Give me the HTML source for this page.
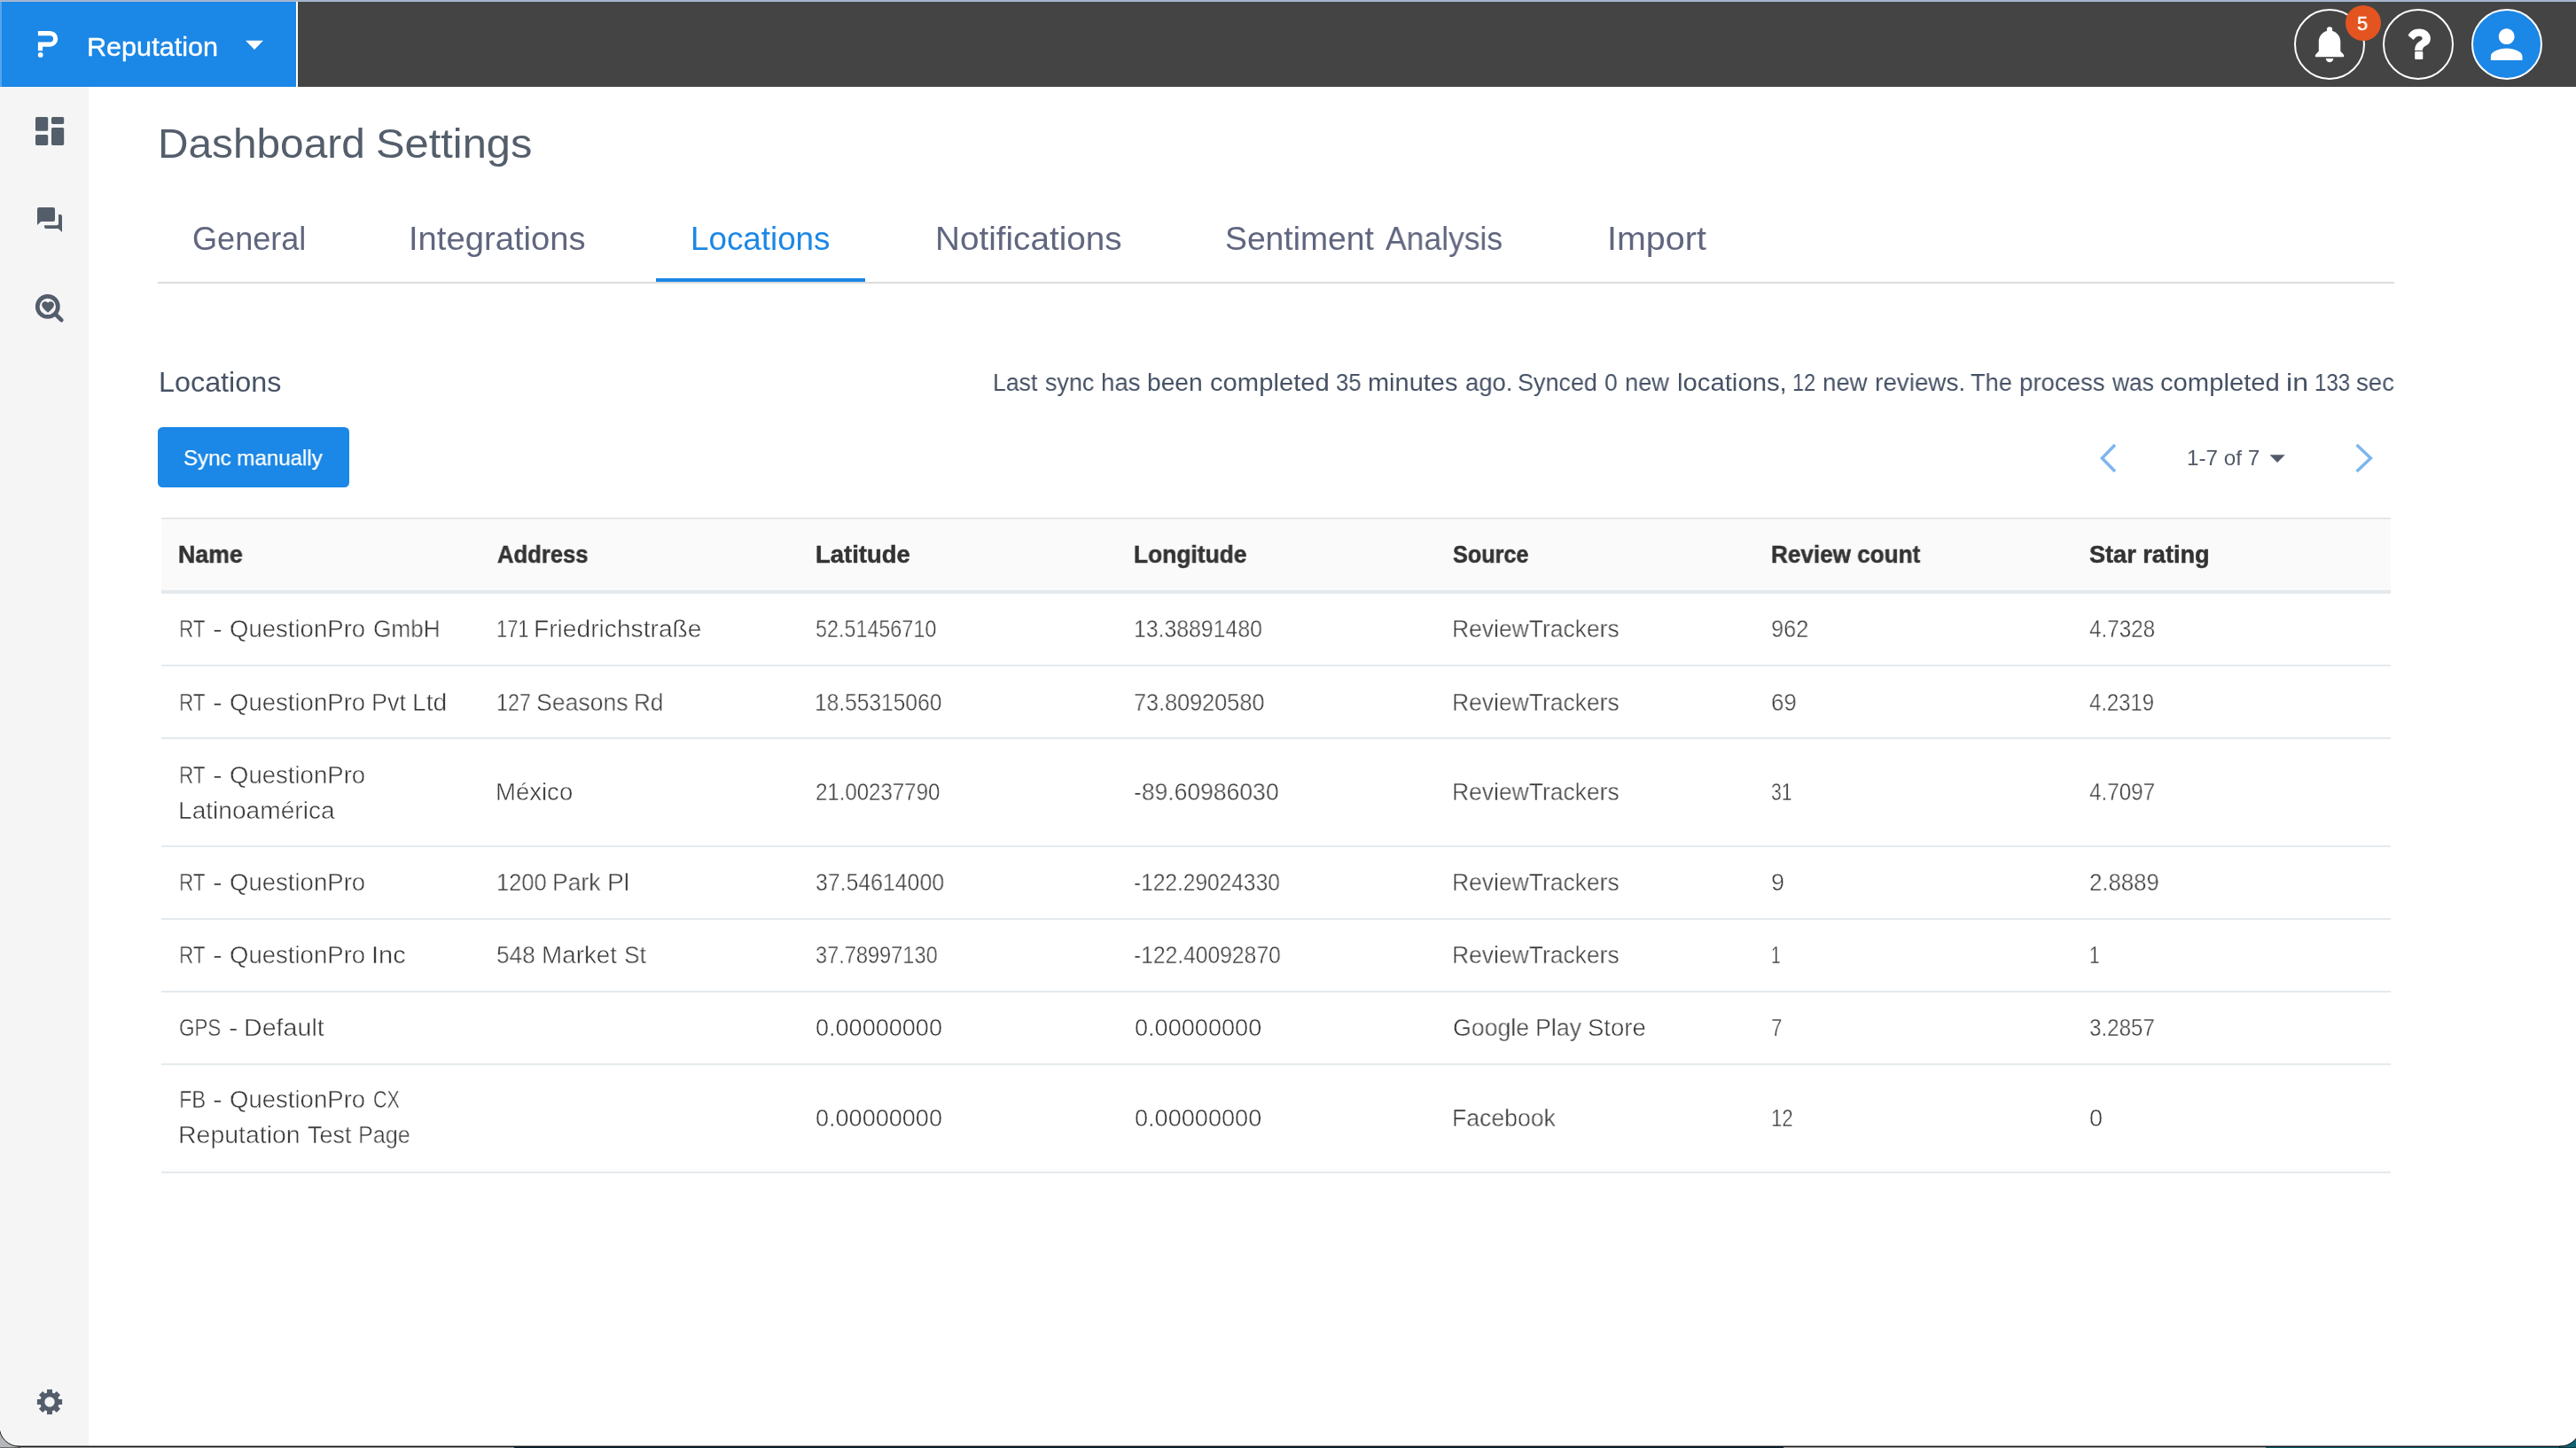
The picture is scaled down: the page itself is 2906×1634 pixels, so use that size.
<!DOCTYPE html>
<html><head><meta charset="utf-8"><title>Dashboard Settings</title><style>
html,body{margin:0;padding:0}
body{width:2906px;height:1634px;position:relative;overflow:hidden;background:#fff;font-family:"Liberation Sans", sans-serif}
.r{position:absolute}
.t{position:absolute;white-space:nowrap;transform-origin:0 0;will-change:transform}
.lt{-webkit-text-stroke:0.45px #fff}
.b5{-webkit-text-stroke:0.5px #fff}
.sw{-webkit-text-stroke:0.4px #fff}
.sb{-webkit-text-stroke:0.25px #fff}
.st{-webkit-text-stroke:0.35px #545e6b}
.sh{-webkit-text-stroke:0.5px #333}
</style></head>
<body>
<div class="r" style="left:0px;top:0px;width:2906px;height:1px;background:#a3b2cb;"></div>
<div class="r" style="left:0px;top:1px;width:2906px;height:1px;background:#afbdd9;"></div>
<div class="r" style="left:0px;top:2px;width:2906px;height:96px;background:#444444;"></div>
<div class="r" style="left:0px;top:2px;width:334px;height:96px;background:#1b87e6;"></div>
<div class="r" style="left:334px;top:2px;width:2px;height:96px;background:#ffffff;"></div>
<div class="r" style="left:0px;top:2px;width:2px;height:96px;background:rgba(255,255,255,0.25);"></div>
<div class="r" style="left:0px;top:98px;width:100px;height:1534px;background:#f5f5f6;"></div>
<div class="r" style="left:178px;top:318px;width:2523px;height:2px;background:#dcdcde;"></div>
<div class="r" style="left:740px;top:314px;width:236px;height:4px;background:#1b87e6;"></div>
<div class="r" style="left:178px;top:482px;width:216px;height:68px;background:#1b87e6;border-radius:5.5px"></div>
<div class="r" style="left:182px;top:584px;width:2515px;height:2px;background:#e8e8e8;"></div>
<div class="r" style="left:182px;top:586px;width:2515px;height:79.7px;background:#fafafa;"></div>
<div class="r" style="left:182px;top:665.7px;width:2515px;height:4.2px;background:#e5e9ec;"></div>
<div class="r" style="left:182px;top:750.2px;width:2515px;height:2px;background:#e4e9ed;"></div>
<div class="r" style="left:182px;top:832.2px;width:2515px;height:2px;background:#e4e9ed;"></div>
<div class="r" style="left:182px;top:954.1px;width:2515px;height:2px;background:#e4e9ed;"></div>
<div class="r" style="left:182px;top:1036.3px;width:2515px;height:2px;background:#e4e9ed;"></div>
<div class="r" style="left:182px;top:1118.1px;width:2515px;height:2px;background:#e4e9ed;"></div>
<div class="r" style="left:182px;top:1199.9px;width:2515px;height:2px;background:#e4e9ed;"></div>
<div class="r" style="left:182px;top:1322.0px;width:2515px;height:2px;background:#e4e9ed;"></div>
<div class="r" style="left:2588px;top:10px;width:80px;height:80px;border-radius:50%;border:2.2px solid #fff;box-sizing:border-box;background:transparent"></div>
<div class="r" style="left:2688px;top:10px;width:80px;height:80px;border-radius:50%;border:2.2px solid #fff;box-sizing:border-box;background:transparent"></div>
<div class="r" style="left:2788px;top:10px;width:80px;height:80px;border-radius:50%;border:2.2px solid #fff;box-sizing:border-box;background:#1b87e6"></div>
<div class="r" style="left:2646px;top:6px;width:40px;height:40px;border-radius:50%;background:#e35420"></div>
<svg class="r" style="left:0;top:0" width="2906" height="1634" viewBox="0 0 2906 1634">
<!-- logo -->
<path d="M42.9 37.6 H56.4 A6.25 6.25 0 0 1 56.4 50.1 H45.5 V57.2" fill="none" stroke="#fff" stroke-width="5.2"/>
<circle cx="45.7" cy="61.9" r="2.9" fill="#fff"/>
<path d="M277 45.8 H297 L287 56 Z" fill="#fff"/>
<!-- dashboard -->
<g fill="#545e6b">
<rect x="40" y="132" width="14.2" height="15.8" rx="1.6"/>
<rect x="40" y="152" width="14.2" height="11.9" rx="1.6"/>
<rect x="58" y="132" width="14.2" height="7.9" rx="1.6"/>
<rect x="58" y="144" width="14.2" height="19.9" rx="1.6"/>
<!-- chat -->
<path d="M44 234 H60 a2 2 0 0 1 2 2 V248 a2 2 0 0 1 -2 2 H46.2 L42 254 V236 a2 2 0 0 1 2 -2z"/>
<path d="M66 242 h2 a2 2 0 0 1 2 2 V262 l-4.2 -4.1 H52 a2 2 0 0 1 -2 -2 v-1.7 h14 a2 2 0 0 0 2 -2 z"/>
<!-- search heart -->
<circle cx="53.8" cy="345.9" r="11.55" fill="none" stroke="#545e6b" stroke-width="4.7"/>
<path d="M62.6 354.6 L69.3 361.2" fill="none" stroke="#545e6b" stroke-width="4.7" stroke-linecap="round"/>
<path transform="translate(45.83 338.25) scale(0.685)" d="M12 21.35l-1.45-1.32C5.4 15.36 2 12.28 2 8.5 2 5.42 4.42 3 7.5 3c1.74 0 3.41.81 4.5 2.09C13.09 3.81 14.76 3 16.5 3 19.58 3 22 5.42 22 8.5c0 3.78-3.4 6.86-8.55 11.54L12 21.35z"/>
</g>
<g transform="translate(56 1582)" fill="#545e6b"><circle r="8.2" fill="none" stroke="#545e6b" stroke-width="5"/><rect x="-3" y="-14.1" width="6" height="5" transform="rotate(0)"/><rect x="-3" y="-14.1" width="6" height="5" transform="rotate(45)"/><rect x="-3" y="-14.1" width="6" height="5" transform="rotate(90)"/><rect x="-3" y="-14.1" width="6" height="5" transform="rotate(135)"/><rect x="-3" y="-14.1" width="6" height="5" transform="rotate(180)"/><rect x="-3" y="-14.1" width="6" height="5" transform="rotate(225)"/><rect x="-3" y="-14.1" width="6" height="5" transform="rotate(270)"/><rect x="-3" y="-14.1" width="6" height="5" transform="rotate(315)"/></g>
<!-- bell -->
<g fill="#fff">
<circle cx="2628.05" cy="33.4" r="3.15"/>
<path d="M2624.9 35.1 C2620 36.3 2615.8 41 2615.8 46.9 V57.7 L2611.9 61.9 V64.2 H2644.2 V61.9 L2640.3 57.7 V46.9 C2640.3 41 2636.1 36.3 2631.2 35.1 Z"/>
<path d="M2623.8 66 H2632.3 A4.25 4.2 0 0 1 2623.8 66 Z"/>
<!-- question -->
<path d="M2716.6 39.9 C2718.6 35.8 2722.6 32.4 2729 32.4 C2736.2 32.4 2741.9 37 2741.9 43.2 C2741.9 48.2 2739 50.4 2735.6 52.2 C2733.7 53.3 2732.9 54.6 2732.9 56.9 H2724.2 C2724.2 52 2725.9 49.4 2729 47 C2731.6 45.2 2732.7 44.6 2732.7 43.2 C2732.7 41.6 2731.1 40.7 2729 40.7 C2726.4 40.7 2724.6 42.4 2722.6 45.1 Z"/>
<rect x="2724.2" y="58.1" width="9.1" height="8.9" rx="0.9"/>
<!-- person -->
<path transform="translate(2801 23.4) scale(2.225)" d="M12 12c2.21 0 4-1.79 4-4s-1.79-4-4-4-4 1.79-4 4 1.79 4 4 4zm0 2c-2.67 0-8 1.34-8 4v2h16v-2c0-2.66-5.33-4-8-4z"/>
</g>
<!-- pagination -->
<path d="M2386 502 L2371.4 517 L2386 532" fill="none" stroke="#7db6f0" stroke-width="3.5"/>
<path d="M2658.6 502 L2674.4 517 L2658.6 532" fill="none" stroke="#7db6f0" stroke-width="3.5"/>
<path d="M2560.5 513.3 H2577.7 L2569.1 522 Z" fill="#525a68"/>
<!-- window bottom edge -->
<rect x="0" y="1631.6" width="2906" height="2.4" fill="#0a0a0a"/>
<rect x="0" y="1632.9" width="580" height="1.1" fill="#9c9c9c"/>
<rect x="580" y="1632.9" width="1432" height="1.1" fill="#0d2a3a"/>
<rect x="2012" y="1632.9" width="544" height="1.1" fill="#a6a6a6"/>
<rect x="2556" y="1632.9" width="350" height="1.1" fill="#0f5f70"/>
<path d="M-1 1609.3 A23 23 0 0 0 22 1632.3 V1634 H-1 Z" fill="#b4b6ba" stroke="#1c1c1c" stroke-width="1"/>
<path d="M2887.4 1632.2 A24.4 24.4 0 0 0 2911.8 1607.8 V1634 H2887.4 Z" fill="#0f6373" stroke="#101010" stroke-width="1"/>
</svg>
<div class="t sw" style="left:97.5px;top:34px;font-size:29.3px;line-height:38px;color:#fff;transform:scaleX(1.0442)">Reputation</div>
<div class="t" style="left:177.8px;top:131px;font-size:47px;line-height:61px;color:#545e6b;transform:scaleX(1.0166)">Dashboard</div>
<div class="t" style="left:424.1px;top:131px;font-size:47px;line-height:61px;color:#545e6b;transform:scaleX(1.0386)">Settings</div>
<div class="t" style="left:216.7px;top:246px;font-size:36.1px;line-height:47px;color:#61667f;transform:scaleX(0.9976)">General</div>
<div class="t" style="left:460.8px;top:246px;font-size:36.1px;line-height:47px;color:#61667f;transform:scaleX(1.0587)">Integrations</div>
<div class="t" style="left:779.2px;top:246px;font-size:36.1px;line-height:47px;color:#1b87e6;transform:scaleX(1.0193)">Locations</div>
<div class="t" style="left:1055.0px;top:246px;font-size:36.1px;line-height:47px;color:#61667f;transform:scaleX(1.0719)">Notifications</div>
<div class="t" style="left:1382.2px;top:246px;font-size:36.1px;line-height:47px;color:#61667f;transform:scaleX(1.0338)">Sentiment</div>
<div class="t" style="left:1562.9px;top:246px;font-size:36.1px;line-height:47px;color:#61667f;transform:scaleX(0.9835)">Analysis</div>
<div class="t" style="left:1813.1px;top:246px;font-size:36.1px;line-height:47px;color:#61667f;transform:scaleX(1.0939)">Import</div>
<div class="t" style="left:178.5px;top:411px;font-size:31.6px;line-height:41px;color:#465265;transform:scaleX(1.0235)">Locations</div>
<div class="t" style="left:1119.7px;top:413px;font-size:28.2px;line-height:37px;color:#465265;transform:scaleX(0.9451)">Last</div>
<div class="t" style="left:1178.9px;top:413px;font-size:28.2px;line-height:37px;color:#465265;transform:scaleX(0.9554)">sync</div>
<div class="t" style="left:1242.3px;top:413px;font-size:28.2px;line-height:37px;color:#465265;transform:scaleX(0.9810)">has</div>
<div class="t" style="left:1294.3px;top:413px;font-size:28.2px;line-height:37px;color:#465265;transform:scaleX(1.0000)">been</div>
<div class="t" style="left:1365.2px;top:413px;font-size:28.2px;line-height:37px;color:#465265;transform:scaleX(1.0362)">completed</div>
<div class="t" style="left:1507.0px;top:413px;font-size:28.2px;line-height:37px;color:#465265;transform:scaleX(0.9103)">35</div>
<div class="t" style="left:1543.0px;top:413px;font-size:28.2px;line-height:37px;color:#465265;transform:scaleX(1.0271)">minutes</div>
<div class="t" style="left:1652.8px;top:413px;font-size:28.2px;line-height:37px;color:#465265;transform:scaleX(0.9745)">ago.</div>
<div class="t" style="left:1711.8px;top:413px;font-size:28.2px;line-height:37px;color:#465265;transform:scaleX(0.9560)">Synced</div>
<div class="t" style="left:1809.8px;top:413px;font-size:28.2px;line-height:37px;color:#465265;transform:scaleX(0.9429)">0</div>
<div class="t" style="left:1833.1px;top:413px;font-size:28.2px;line-height:37px;color:#465265;transform:scaleX(0.9660)">new</div>
<div class="t" style="left:1891.9px;top:413px;font-size:28.2px;line-height:37px;color:#465265;transform:scaleX(1.0391)">locations,</div>
<div class="t" style="left:2021.9px;top:413px;font-size:28.2px;line-height:37px;color:#465265;transform:scaleX(0.8321)">12</div>
<div class="t" style="left:2055.8px;top:413px;font-size:28.2px;line-height:37px;color:#465265;transform:scaleX(0.9780)">new</div>
<div class="t" style="left:2114.8px;top:413px;font-size:28.2px;line-height:37px;color:#465265;transform:scaleX(0.9879)">reviews.</div>
<div class="t" style="left:2222.9px;top:413px;font-size:28.2px;line-height:37px;color:#465265;transform:scaleX(0.9630)">The</div>
<div class="t" style="left:2277.9px;top:413px;font-size:28.2px;line-height:37px;color:#465265;transform:scaleX(0.9792)">process</div>
<div class="t" style="left:2383.1px;top:413px;font-size:28.2px;line-height:37px;color:#465265;transform:scaleX(0.9347)">was</div>
<div class="t" style="left:2437.2px;top:413px;font-size:28.2px;line-height:37px;color:#465265;transform:scaleX(1.0362)">completed</div>
<div class="t" style="left:2579.4px;top:413px;font-size:28.2px;line-height:37px;color:#465265;transform:scaleX(1.1389)">in</div>
<div class="t" style="left:2610.8px;top:413px;font-size:28.2px;line-height:37px;color:#465265;transform:scaleX(0.8545)">133</div>
<div class="t" style="left:2657.6px;top:413px;font-size:28.2px;line-height:37px;color:#465265;transform:scaleX(0.9810)">sec</div>
<div class="t sb" style="left:207.0px;top:501px;font-size:24.8px;line-height:32px;color:#fff;transform:scaleX(0.9725)">Sync manually</div>
<div class="t" style="left:2467.3px;top:502px;font-size:23.7px;line-height:31px;color:#4f5866;transform:scaleX(1.0221)">1-7 of 7</div>
<div class="t b5" style="left:2659.4px;top:12px;font-size:22.5px;line-height:29px;color:#fff;transform:scaleX(0.9636)">5</div>
<div class="t sh" style="left:201.2px;top:609px;font-size:27px;line-height:35px;color:#333;transform:scaleX(0.9901);font-weight:700">Name</div>
<div class="t sh" style="left:560.6px;top:609px;font-size:27px;line-height:35px;color:#333;transform:scaleX(0.9491);font-weight:700">Address</div>
<div class="t sh" style="left:919.8px;top:609px;font-size:27px;line-height:35px;color:#333;transform:scaleX(1.0157);font-weight:700">Latitude</div>
<div class="t sh" style="left:1279.0px;top:609px;font-size:27px;line-height:35px;color:#333;transform:scaleX(0.9766);font-weight:700">Longitude</div>
<div class="t sh" style="left:1639.2px;top:609px;font-size:27px;line-height:35px;color:#333;transform:scaleX(0.9333);font-weight:700">Source</div>
<div class="t sh" style="left:1997.6px;top:609px;font-size:27px;line-height:35px;color:#333;transform:scaleX(0.9669);font-weight:700">Review count</div>
<div class="t sh" style="left:2357.3px;top:609px;font-size:27px;line-height:35px;color:#333;transform:scaleX(1.0045);font-weight:700">Star rating</div>
<div class="t lt" style="left:201.8px;top:693px;font-size:27px;line-height:35px;color:#3a3a3a;transform:scaleX(0.8333)">RT</div>
<div class="t lt" style="left:239.8px;top:693px;font-size:27px;line-height:35px;color:#3a3a3a;transform:scaleX(1.1857)">-</div>
<div class="t lt" style="left:258.6px;top:693px;font-size:27px;line-height:35px;color:#3a3a3a;transform:scaleX(1.0203)">QuestionPro</div>
<div class="t lt" style="left:420.6px;top:693px;font-size:27px;line-height:35px;color:#3a3a3a;transform:scaleX(0.9693)">GmbH</div>
<div class="t lt" style="left:559.8px;top:693px;font-size:27px;line-height:35px;color:#3a3a3a;transform:scaleX(0.8119)">171</div>
<div class="t lt" style="left:601.9px;top:693px;font-size:27px;line-height:35px;color:#3a3a3a;transform:scaleX(1.0438)">Friedrichstraße</div>
<div class="t lt" style="left:920.0px;top:693px;font-size:27px;line-height:35px;color:#3a3a3a;transform:scaleX(0.8647)">52.51456710</div>
<div class="t lt" style="left:1278.5px;top:693px;font-size:27px;line-height:35px;color:#3a3a3a;transform:scaleX(0.9187)">13.38891480</div>
<div class="t lt" style="left:1638.0px;top:693px;font-size:27px;line-height:35px;color:#3a3a3a;transform:scaleX(0.9800)">ReviewTrackers</div>
<div class="t lt" style="left:1997.8px;top:693px;font-size:27px;line-height:35px;color:#3a3a3a;transform:scaleX(0.9395)">962</div>
<div class="t lt" style="left:2357.0px;top:693px;font-size:27px;line-height:35px;color:#3a3a3a;transform:scaleX(0.8975)">4.7328</div>
<div class="t lt" style="left:201.8px;top:776px;font-size:27px;line-height:35px;color:#3a3a3a;transform:scaleX(0.8333)">RT</div>
<div class="t lt" style="left:239.8px;top:776px;font-size:27px;line-height:35px;color:#3a3a3a;transform:scaleX(1.1857)">-</div>
<div class="t lt" style="left:258.6px;top:776px;font-size:27px;line-height:35px;color:#3a3a3a;transform:scaleX(1.0203)">QuestionPro</div>
<div class="t lt" style="left:418.5px;top:776px;font-size:27px;line-height:35px;color:#3a3a3a;transform:scaleX(1.0027)">Pvt</div>
<div class="t lt" style="left:465.3px;top:776px;font-size:27px;line-height:35px;color:#3a3a3a;transform:scaleX(1.0441)">Ltd</div>
<div class="t lt" style="left:559.7px;top:776px;font-size:27px;line-height:35px;color:#3a3a3a;transform:scaleX(0.8643)">127</div>
<div class="t lt" style="left:605.2px;top:776px;font-size:27px;line-height:35px;color:#3a3a3a;transform:scaleX(0.9864)">Seasons</div>
<div class="t lt" style="left:715.3px;top:776px;font-size:27px;line-height:35px;color:#3a3a3a;transform:scaleX(0.9645)">Rd</div>
<div class="t lt" style="left:919.1px;top:776px;font-size:27px;line-height:35px;color:#3a3a3a;transform:scaleX(0.9090)">18.55315060</div>
<div class="t lt" style="left:1279.4px;top:776px;font-size:27px;line-height:35px;color:#3a3a3a;transform:scaleX(0.9346)">73.80920580</div>
<div class="t lt" style="left:1638.0px;top:776px;font-size:27px;line-height:35px;color:#3a3a3a;transform:scaleX(0.9800)">ReviewTrackers</div>
<div class="t lt" style="left:1997.7px;top:776px;font-size:27px;line-height:35px;color:#3a3a3a;transform:scaleX(0.9571)">69</div>
<div class="t lt" style="left:2357.0px;top:776px;font-size:27px;line-height:35px;color:#3a3a3a;transform:scaleX(0.8837)">4.2319</div>
<div class="t lt" style="left:201.8px;top:858px;font-size:27px;line-height:35px;color:#3a3a3a;transform:scaleX(0.8333)">RT</div>
<div class="t lt" style="left:239.8px;top:858px;font-size:27px;line-height:35px;color:#3a3a3a;transform:scaleX(1.1857)">-</div>
<div class="t lt" style="left:258.6px;top:858px;font-size:27px;line-height:35px;color:#3a3a3a;transform:scaleX(1.0203)">QuestionPro</div>
<div class="t lt" style="left:200.8px;top:898px;font-size:27px;line-height:35px;color:#3a3a3a;transform:scaleX(1.0411)">Latinoamérica</div>
<div class="t lt" style="left:559.4px;top:877px;font-size:27px;line-height:35px;color:#3a3a3a;transform:scaleX(1.0195)">México</div>
<div class="t lt" style="left:920.0px;top:877px;font-size:27px;line-height:35px;color:#3a3a3a;transform:scaleX(0.8897)">21.00237790</div>
<div class="t lt" style="left:1279.3px;top:877px;font-size:27px;line-height:35px;color:#3a3a3a;transform:scaleX(0.9818)">-89.60986030</div>
<div class="t lt" style="left:1638.0px;top:877px;font-size:27px;line-height:35px;color:#3a3a3a;transform:scaleX(0.9800)">ReviewTrackers</div>
<div class="t lt" style="left:1997.9px;top:877px;font-size:27px;line-height:35px;color:#3a3a3a;transform:scaleX(0.7857)">31</div>
<div class="t lt" style="left:2357.0px;top:877px;font-size:27px;line-height:35px;color:#3a3a3a;transform:scaleX(0.8975)">4.7097</div>
<div class="t lt" style="left:201.8px;top:979px;font-size:27px;line-height:35px;color:#3a3a3a;transform:scaleX(0.8333)">RT</div>
<div class="t lt" style="left:239.8px;top:979px;font-size:27px;line-height:35px;color:#3a3a3a;transform:scaleX(1.1857)">-</div>
<div class="t lt" style="left:258.6px;top:979px;font-size:27px;line-height:35px;color:#3a3a3a;transform:scaleX(1.0203)">QuestionPro</div>
<div class="t lt" style="left:560.3px;top:979px;font-size:27px;line-height:35px;color:#3a3a3a;transform:scaleX(0.9439)">1200</div>
<div class="t lt" style="left:623.4px;top:979px;font-size:27px;line-height:35px;color:#3a3a3a;transform:scaleX(0.9830)">Park</div>
<div class="t lt" style="left:685.2px;top:979px;font-size:27px;line-height:35px;color:#3a3a3a;transform:scaleX(1.0450)">Pl</div>
<div class="t lt" style="left:920.0px;top:979px;font-size:27px;line-height:35px;color:#3a3a3a;transform:scaleX(0.9199)">37.54614000</div>
<div class="t lt" style="left:1279.4px;top:979px;font-size:27px;line-height:35px;color:#3a3a3a;transform:scaleX(0.9072)">-122.29024330</div>
<div class="t lt" style="left:1638.0px;top:979px;font-size:27px;line-height:35px;color:#3a3a3a;transform:scaleX(0.9800)">ReviewTrackers</div>
<div class="t lt" style="left:1997.7px;top:979px;font-size:27px;line-height:35px;color:#3a3a3a;transform:scaleX(0.9846)">9</div>
<div class="t lt" style="left:2356.9px;top:979px;font-size:27px;line-height:35px;color:#3a3a3a;transform:scaleX(0.9537)">2.8889</div>
<div class="t lt" style="left:201.8px;top:1061px;font-size:27px;line-height:35px;color:#3a3a3a;transform:scaleX(0.8333)">RT</div>
<div class="t lt" style="left:239.8px;top:1061px;font-size:27px;line-height:35px;color:#3a3a3a;transform:scaleX(1.1857)">-</div>
<div class="t lt" style="left:258.6px;top:1061px;font-size:27px;line-height:35px;color:#3a3a3a;transform:scaleX(1.0203)">QuestionPro</div>
<div class="t lt" style="left:418.6px;top:1061px;font-size:27px;line-height:35px;color:#3a3a3a;transform:scaleX(1.0758)">Inc</div>
<div class="t lt" style="left:560.4px;top:1061px;font-size:27px;line-height:35px;color:#3a3a3a;transform:scaleX(0.9721)">548</div>
<div class="t lt" style="left:610.5px;top:1061px;font-size:27px;line-height:35px;color:#3a3a3a;transform:scaleX(1.0300)">Market</div>
<div class="t lt" style="left:704.3px;top:1061px;font-size:27px;line-height:35px;color:#3a3a3a;transform:scaleX(0.9750)">St</div>
<div class="t lt" style="left:920.0px;top:1061px;font-size:27px;line-height:35px;color:#3a3a3a;transform:scaleX(0.8731)">37.78997130</div>
<div class="t lt" style="left:1279.4px;top:1061px;font-size:27px;line-height:35px;color:#3a3a3a;transform:scaleX(0.9122)">-122.40092870</div>
<div class="t lt" style="left:1638.0px;top:1061px;font-size:27px;line-height:35px;color:#3a3a3a;transform:scaleX(0.9800)">ReviewTrackers</div>
<div class="t lt" style="left:1998.1px;top:1061px;font-size:27px;line-height:35px;color:#3a3a3a;transform:scaleX(0.7167)">1</div>
<div class="t lt" style="left:2356.8px;top:1061px;font-size:27px;line-height:35px;color:#3a3a3a;transform:scaleX(0.7750)">1</div>
<div class="t lt" style="left:202.1px;top:1143px;font-size:27px;line-height:35px;color:#3a3a3a;transform:scaleX(0.8273)">GPS</div>
<div class="t lt" style="left:257.6px;top:1143px;font-size:27px;line-height:35px;color:#3a3a3a;transform:scaleX(1.1571)">-</div>
<div class="t lt" style="left:275.3px;top:1143px;font-size:27px;line-height:35px;color:#3a3a3a;transform:scaleX(1.0602)">Default</div>
<div class="t lt" style="left:920.3px;top:1143px;font-size:27px;line-height:35px;color:#3a3a3a;transform:scaleX(1.0021)">0.00000000</div>
<div class="t lt" style="left:1279.7px;top:1143px;font-size:27px;line-height:35px;color:#3a3a3a;transform:scaleX(1.0043)">0.00000000</div>
<div class="t lt" style="left:1639.0px;top:1143px;font-size:27px;line-height:35px;color:#3a3a3a;transform:scaleX(0.9894)">Google</div>
<div class="t lt" style="left:1732.0px;top:1143px;font-size:27px;line-height:35px;color:#3a3a3a;transform:scaleX(0.9900)">Play</div>
<div class="t lt" style="left:1791.0px;top:1143px;font-size:27px;line-height:35px;color:#3a3a3a;transform:scaleX(1.0194)">Store</div>
<div class="t lt" style="left:1997.9px;top:1143px;font-size:27px;line-height:35px;color:#3a3a3a;transform:scaleX(0.8231)">7</div>
<div class="t lt" style="left:2357.0px;top:1143px;font-size:27px;line-height:35px;color:#3a3a3a;transform:scaleX(0.8938)">3.2857</div>
<div class="t lt" style="left:201.8px;top:1224px;font-size:27px;line-height:35px;color:#3a3a3a;transform:scaleX(0.8710)">FB</div>
<div class="t lt" style="left:239.8px;top:1224px;font-size:27px;line-height:35px;color:#3a3a3a;transform:scaleX(1.1857)">-</div>
<div class="t lt" style="left:258.6px;top:1224px;font-size:27px;line-height:35px;color:#3a3a3a;transform:scaleX(1.0203)">QuestionPro</div>
<div class="t lt" style="left:420.5px;top:1224px;font-size:27px;line-height:35px;color:#3a3a3a;transform:scaleX(0.7944)">CX</div>
<div class="t lt" style="left:201.2px;top:1264px;font-size:27px;line-height:35px;color:#3a3a3a;transform:scaleX(1.0543)">Reputation</div>
<div class="t lt" style="left:346.9px;top:1264px;font-size:27px;line-height:35px;color:#3a3a3a;transform:scaleX(0.9958)">Test</div>
<div class="t lt" style="left:403.6px;top:1264px;font-size:27px;line-height:35px;color:#3a3a3a;transform:scaleX(0.9317)">Page</div>
<div class="t lt" style="left:920.3px;top:1245px;font-size:27px;line-height:35px;color:#3a3a3a;transform:scaleX(1.0021)">0.00000000</div>
<div class="t lt" style="left:1279.7px;top:1245px;font-size:27px;line-height:35px;color:#3a3a3a;transform:scaleX(1.0043)">0.00000000</div>
<div class="t lt" style="left:1638.0px;top:1245px;font-size:27px;line-height:35px;color:#3a3a3a;transform:scaleX(0.9862)">Facebook</div>
<div class="t lt" style="left:1997.9px;top:1245px;font-size:27px;line-height:35px;color:#3a3a3a;transform:scaleX(0.8222)">12</div>
<div class="t lt" style="left:2357.3px;top:1245px;font-size:27px;line-height:35px;color:#3a3a3a;transform:scaleX(0.9769)">0</div>
</body></html>
